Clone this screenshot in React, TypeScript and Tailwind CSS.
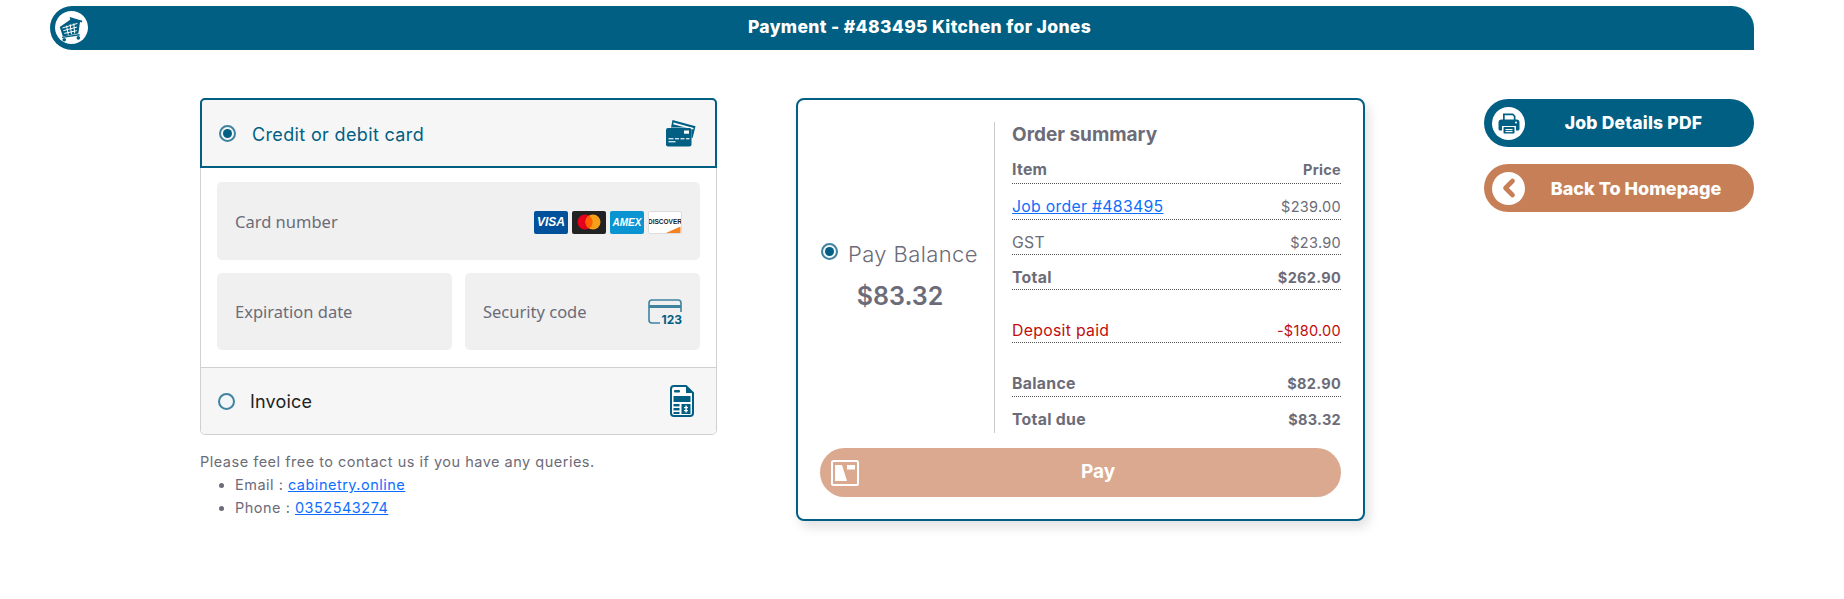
import { ChevronLeft } from "lucide-react";

const sans = "font-['Inter','Liberation_Sans',sans-serif]";

const CartIcon = () => (
  <svg viewBox="0 0 32 32" className="w-[29px] h-[29px]">
    <path d="M14 4.5 L28 8.5 L27.4 10.6 L25.4 10 L23.6 22.5 L6.5 26 L3 15.5 L14.5 7.5 Z" fill="#005f83" />
    <path d="M6 16.5 L22.5 11.5 M7 19.5 L22 15.5 M8 22.5 L21.8 19.5 M10.5 14 L12.5 24 M14.5 12.5 L16 23.5 M18.5 11.5 L19.5 22.5" stroke="#fff" strokeWidth="1.1" fill="none" />
    <path d="M5.5 27 L25 24" stroke="#005f83" strokeWidth="1.4" fill="none" />
    <circle cx="8" cy="29.5" r="2" fill="#005f83" />
    <circle cx="23.5" cy="27.5" r="2" fill="#005f83" />
  </svg>
);

const CardsIcon = () => (
  <svg viewBox="0 0 30 28" className="w-[30px] h-[28px]">
    <path d="M6.5 1 L29.5 7.2 L26.6 19 L25.5 18.7 L25.5 8.5 L5 8.5 Z" fill="#005f83" />
    <path d="M7.6 3.6 L27.6 9 L27.2 10.6 L7.2 5.2 Z" fill="#fff" />
    <rect x="0" y="9" width="25.5" height="18.5" rx="2" fill="#005f83" />
    <rect x="18" y="11.5" width="5" height="3.2" fill="#fff" />
    <rect x="2.5" y="19" width="5" height="1.4" fill="#cfe0e8" />
    <rect x="9" y="19" width="4" height="1.4" fill="#cfe0e8" />
    <rect x="14.5" y="19" width="4" height="1.4" fill="#cfe0e8" />
    <rect x="20" y="19" width="3.5" height="1.4" fill="#cfe0e8" />
    <rect x="2.5" y="22" width="7" height="1.4" fill="#cfe0e8" />
  </svg>
);

const InvoiceIcon = () => (
  <svg viewBox="0 0 24 32" className="w-[24px] h-[32px]">
    <path d="M4 1 H16 L23 8 V28 a3 3 0 0 1 -3 3 H4 a3 3 0 0 1 -3 -3 V4 a3 3 0 0 1 3 -3 Z" fill="#fff" stroke="#005f83" strokeWidth="2" />
    <path d="M16 1 V8 H23 Z" fill="#005f83" />
    <rect x="4" y="5" width="6" height="2.5" rx="1" fill="#005f83" />
    <rect x="3.5" y="11" width="17" height="6" fill="#005f83" />
    <rect x="3.5" y="19" width="6" height="2.4" fill="#005f83" />
    <rect x="3.5" y="23" width="6" height="2.4" fill="#005f83" />
    <rect x="3.5" y="27" width="6" height="2" fill="#005f83" />
    <rect x="11.5" y="19" width="9" height="10" fill="#005f83" />
    <rect x="15.4" y="20.5" width="1.4" height="7" fill="#fff" />
    <rect x="14" y="22" width="4" height="1.2" fill="#fff" />
    <rect x="14" y="25" width="4" height="1.2" fill="#fff" />
  </svg>
);

const PayIcon = () => (
  <svg viewBox="0 0 28 26" className="w-[28px] h-[26px]">
    <rect x="1" y="1" width="26" height="24" rx="1.5" fill="none" stroke="#fff" strokeWidth="2" />
    <path d="M4 5 H11 L16 21 H4 Z" fill="#fff" />
    <rect x="16" y="5" width="8" height="4.5" fill="#fff" />
  </svg>
);

const PrinterIcon = () => (
  <svg viewBox="0 0 24 24" className="w-[24px] h-[24px]">
    <path d="M6 2.5 H16 L18.5 5 V9 H16.8 V5.6 L15.4 4.2 H7.7 V9 H6 Z" fill="#005f83" />
    <path d="M4.5 8.5 H19.5 a3 3 0 0 1 3 3 V18 a1.5 1.5 0 0 1 -1.5 1.5 H19 V15 H5 V19.5 H3 a1.5 1.5 0 0 1 -1.5 -1.5 V11.5 a3 3 0 0 1 3 -3 Z" fill="#005f83" />
    <circle cx="19" cy="11.5" r="1" fill="#fff" />
    <rect x="6.5" y="16" width="11" height="6.5" rx="0.8" fill="#005f83" />
    <rect x="8.5" y="18" width="7" height="1.1" fill="#fff" />
    <rect x="8.5" y="20" width="7" height="1.1" fill="#fff" />
  </svg>
);

const SecurityIcon = () => (
  <div className="relative w-[34px] h-[25px]">
    <svg viewBox="0 0 34 25" className="w-[34px] h-[25px]">
      <path d="M12 24 H4 a3 3 0 0 1 -3 -3 V4 a3 3 0 0 1 3 -3 H30 a3 3 0 0 1 3 3 V13" fill="none" stroke="#3f83a1" strokeWidth="1.6" />
      <rect x="1" y="6" width="32" height="3" fill="#3f83a1" />
    </svg>
    <span className={`absolute right-0 bottom-[-3px] text-[12px] leading-[14px] font-bold text-[#005f83] ${sans}`}>123</span>
  </div>
);

const Radio = ({ checked, className = "" }: { checked?: boolean; className?: string }) => (
  <span
    className={`flex items-center justify-center w-[17px] h-[17px] rounded-full border-2 border-[#3f83a1] bg-[#f3f6f8] shrink-0 ${className}`}
  >
    {checked && <span className="w-[9px] h-[9px] rounded-full bg-[#005f83]" />}
  </span>
);

const CardLogos = () => (
  <div className="flex gap-[4px] mt-[2px]">
    <div className="w-[34px] h-[23px] rounded-[2px] bg-[#00519c] flex items-center justify-center">
      <span className="text-[12px] font-bold italic text-white font-['Liberation_Sans',sans-serif]">VISA</span>
    </div>
    <div className="w-[34px] h-[23px] rounded-[2px] bg-[#222] flex items-center justify-center">
      <svg viewBox="0 0 24 16" className="w-[24px] h-[16px]">
        <circle cx="8" cy="8" r="7.5" fill="#e4001c" />
        <circle cx="16" cy="8" r="7.5" fill="#f79e1b" />
        <path d="M12 1.6 a7.5 7.5 0 0 1 0 12.8 a7.5 7.5 0 0 1 0 -12.8 Z" fill="#ff5f00" />
      </svg>
    </div>
    <div className="w-[34px] h-[23px] rounded-[2px] bg-[#0a95d2] flex items-center justify-center">
      <span className="text-[10px] font-bold italic text-white font-['Liberation_Sans',sans-serif]">AMEX</span>
    </div>
    <div className="relative w-[34px] h-[23px] rounded-[2px] bg-white border border-[#ddd] overflow-hidden flex items-center justify-center">
      <span className="text-[6.5px] font-bold text-[#222] font-['Liberation_Sans',sans-serif]">DISCOVER</span>
      <svg viewBox="0 0 34 23" className="absolute inset-0 w-full h-full">
        <path d="M18 23 L34 16 V23 Z" fill="#f58220" />
      </svg>
    </div>
  </div>
);

const Field = ({ label, children, className = "" }: { label: string; children?: React.ReactNode; className?: string }) => (
  <div className={`flex items-center justify-between rounded-[5px] bg-[#f0f0f0] pl-[18px] pr-[18px] ${className}`}>
    <span className="pt-[2px] text-[16.5px] text-[#6c6c78] font-['Noto_Sans',sans-serif]">{label}</span>
    {children}
  </div>
);

const Row = ({
  left,
  right,
  bold,
  red,
  last,
  size = "h-[36px] pt-[11px]",
}: {
  left: React.ReactNode;
  right: string;
  bold?: boolean;
  red?: boolean;
  last?: boolean;
  size?: string;
}) => (
  <div
    className={`flex items-center justify-between ${size} text-[14.5px] tracking-[0.3px] ${
      last ? "" : "border-b border-dotted border-[#555]"
    } ${bold ? "font-bold" : "font-normal"} ${red ? "text-[#c00d0d]" : "text-[#6c6c78]"}`}
  >
    <span className="text-[15.8px]">{left}</span>
    <span>{right}</span>
  </div>
);

export default function App() {
  return (
    <div className={`w-full min-h-[599px] bg-white ${sans}`}>
      <div className="pt-[6px] pl-[50px] pr-[90px]">
        <div className="relative flex items-center justify-center h-[44px] bg-[#005f83] rounded-l-[22px] rounded-tr-[22px] pb-[2px]">
          <span className="absolute left-[5px] top-[5px] flex items-center justify-center w-[33px] h-[33px] rounded-full bg-white">
            <CartIcon />
          </span>
          <span className="text-[17.5px] font-extrabold tracking-[0.35px] text-white pl-[35px]">Payment - #483495 Kitchen for Jones</span>
        </div>
      </div>

      <div className="flex items-start pl-[200px] pt-[48px]">
        {/* payment methods */}
        <div className="w-[517px] shrink-0">
          <div className="rounded-[5px] border border-[#d0d0d0] bg-white">
            <div className="flex items-center justify-between h-[70px] -m-px mb-0 pl-[17px] pr-[19px] rounded-t-[5px] border-2 border-[#005f83] bg-[#f6f6f6]">
              <div className="flex items-center gap-[16px]">
                <Radio checked />
                <span className="text-[18px] tracking-[0.35px] text-[#005f83] pt-[2px]">Credit or debit card</span>
              </div>
              <CardsIcon />
            </div>
            <div className="flex flex-col gap-[13px] px-[16px] pt-[14px] pb-[17px]">
              <Field label="Card number" className="h-[78px]">
                <CardLogos />
              </Field>
              <div className="grid grid-cols-2 gap-[13px]">
                <Field label="Expiration date" className="h-[77px]" />
                <Field label="Security code" className="h-[77px]">
                  <SecurityIcon />
                </Field>
              </div>
            </div>
            <div className="flex items-center justify-between h-[67px] pl-[17px] pr-[22px] border-t border-[#d0d0d0] bg-[#f6f6f6] rounded-b-[5px]">
              <div className="flex items-center gap-[15px]">
                <Radio />
                <span className="text-[18px] tracking-[0.2px] text-[#222]">Invoice</span>
              </div>
              <InvoiceIcon />
            </div>
          </div>
          <div className="mt-[15px] text-[14.5px] leading-[23px] tracking-[0.5px] text-[#6c6c78]">
            <p>Please feel free to contact us if you have any queries.</p>
            <ul className="list-disc pl-[35px]">
              <li>
                Email : <a className="text-[#0d6efd] underline">cabinetry.online</a>
              </li>
              <li>
                Phone : <a className="text-[#0d6efd] underline">0352543274</a>
              </li>
            </ul>
          </div>
        </div>

        {/* order summary */}
        <div className="w-[569px] shrink-0 ml-[79px] rounded-[8px] border-2 border-[#005f83] bg-white px-[22px] pt-[22px] pb-[22px] shadow-[4px_6px_12px_rgba(0,0,0,0.12)]">
          <div className="flex h-[311px]">
            <div className="w-[174px] shrink-0 flex flex-col items-center justify-center pb-[2px]">
              <div className="flex items-center gap-[10px] pr-[15px]">
                <Radio checked className="-mt-[5px]" />
                <span className="text-[22px] font-light tracking-[0.4px] text-[#6c6c78] whitespace-nowrap">Pay Balance</span>
              </div>
              <span className="mt-[7px] pr-[14px] text-[25px] font-semibold text-[#6c6c78]">$83.32</span>
            </div>
            <div className="flex-1 pl-[17px] border-l border-[#ccc]">
              <h2 className="text-[19px] font-bold text-[#6c6c78] leading-[26px]">Order summary</h2>
              <Row left="Item" right="Price" bold size="h-[36px] pt-[9px]" />
              <Row left={<a className="text-[#0d6efd] underline">Job order #483495</a>} right="$239.00" />
              <Row left="GST" right="$23.90" size="h-[35px] pt-[11px]" />
              <Row left="Total" right="$262.90" bold size="h-[35px] pt-[11px]" />
              <Row left="Deposit paid" right="-$180.00" red size="h-[53px] pt-[29px]" />
              <Row left="Balance" right="$82.90" bold size="h-[54px] pt-[28px]" />
              <Row left="Total due" right="$83.32" bold last size="h-[36px] pt-[9px]" />
            </div>
          </div>
          <button className="relative mt-[15px] flex items-center justify-center w-full h-[49px] rounded-full bg-[#dba98f] text-white text-[19px] font-bold pl-[35px]">
            <span className="absolute left-[11px] top-[12px]">
              <PayIcon />
            </span>
            Pay
          </button>
        </div>

        {/* actions */}
        <div className="w-[270px] shrink-0 ml-[119px] flex flex-col gap-[17px] pt-px">
          <div className="relative flex items-center justify-center h-[48px] rounded-full bg-[#005f83] text-white text-[17.5px] font-extrabold tracking-[0.2px] pl-[29px]">
            <span className="absolute left-[8px] top-[7.5px] flex items-center justify-center w-[33px] h-[33px] rounded-full bg-white">
              <PrinterIcon />
            </span>
            Job Details PDF
          </div>
          <div className="relative flex items-center justify-center h-[48px] rounded-full bg-[#c67f57] text-white text-[18px] font-extrabold pl-[34px] whitespace-nowrap">
            <span className="absolute left-[8px] top-[7.5px] flex items-center justify-center w-[33px] h-[33px] rounded-full bg-white">
              <ChevronLeft className="w-[28px] h-[28px] text-[#c67f57]" strokeWidth={4} />
            </span>
            Back To Homepage
          </div>
        </div>
      </div>
    </div>
  );
}
